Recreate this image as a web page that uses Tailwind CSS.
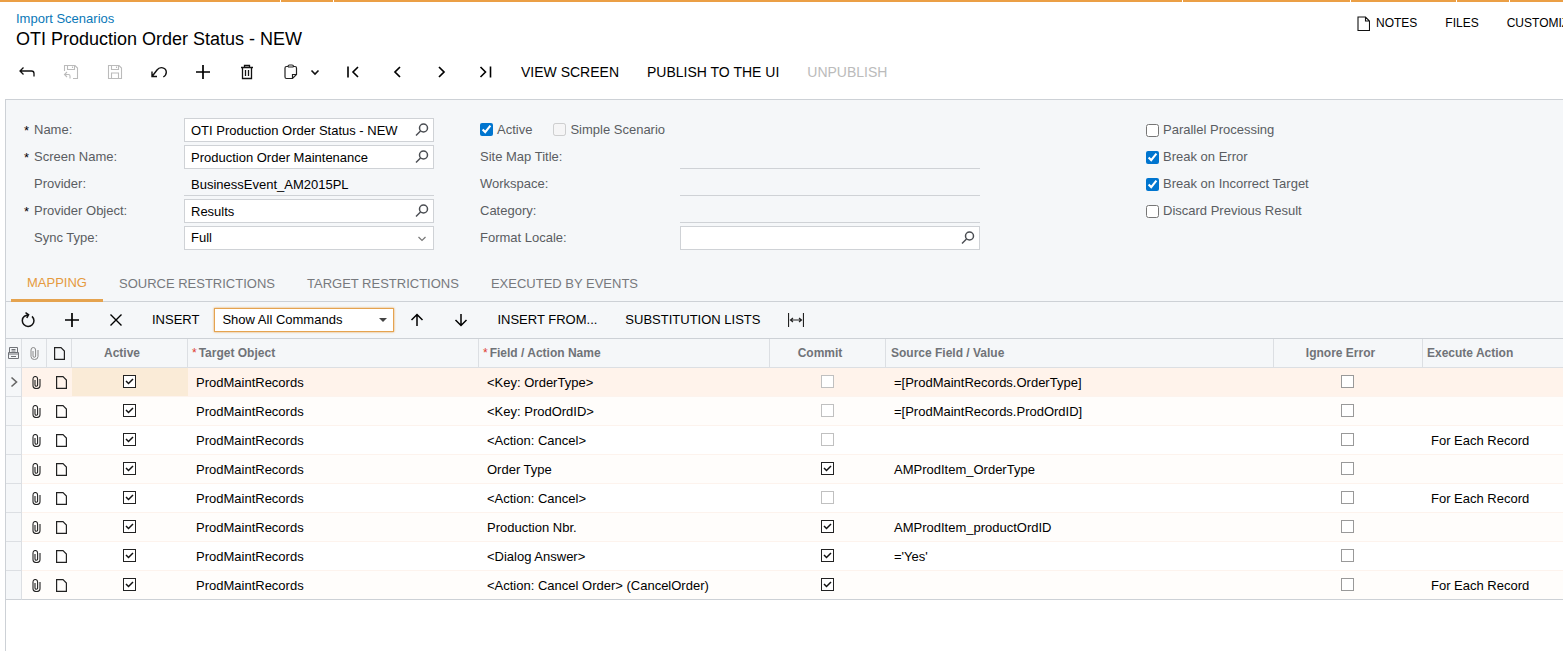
<!DOCTYPE html>
<html lang="en">
<head>
    <meta charset="UTF-8">
    <meta name="viewport" content="width=device-width, initial-scale=1.0">
    <title>Import Scenarios</title>
    <script src="https://cdn.jsdelivr.net/npm/@tailwindcss/browser@4"></script>
</head>
<body class="min-h-screen flex flex-col bg-white text-black text-[13px] leading-4 font-['Liberation_Sans',Arial,sans-serif] overflow-x-hidden">

    <!-- Top strip -->
    <div class="flex gap-px h-0.5 shrink-0">
        <div class="w-[280px] bg-[#eb9f45]"></div>
        <div class="w-[52px] bg-[#eb9f45]"></div>
        <div class="grow bg-[#eb9f45]"></div>
        <div class="w-[167px] bg-[#eb9f45]"></div>
        <div class="w-[105px] bg-[#eb9f45]"></div>
        <div class="w-[52px] bg-[#eb9f45]"></div>
        <div class="w-[53px] bg-[#eb9f45]"></div>
    </div>

    <!-- Header -->
    <header class="flex justify-between h-12 pl-4 pt-[9px]">
        <div>
            <a href="#" class="block text-[#0a78b8]">Import Scenarios</a>
            <h1 class="text-[18px] leading-6">OTI Production Order Status - NEW</h1>
        </div>
        <div class="flex items-start gap-7 w-[206px] pt-0.5 overflow-hidden text-xs leading-5 whitespace-nowrap">
            <button class="flex items-center gap-1.5">
                <svg class="w-[13px] h-[15px]" viewBox="0 0 13 15" fill="none" stroke="#111" stroke-width="1.1"><path d="M1 1h7.500l4 4v9.500H1zM8.500 1v4h4"/></svg>
                NOTES
            </button>
            <button>FILES</button>
            <button>CUSTOMIZATION</button>
        </div>
    </header>

    <!-- Main toolbar -->
    <div class="flex items-center pl-[5px] h-11 text-sm">
        <button aria-label="Back" class="w-11 flex justify-center"><svg class="w-4 h-4" viewBox="0 0 16 16" fill="none" stroke="#111" stroke-width="1.3"><path d="M4.500 3.500L1 7l3.500 3.500M1 7h11.500q2.500 0 2.500 2.500v3"/></svg></button>
        <button aria-label="Save and close" disabled class="w-11 flex justify-center"><svg class="w-4 h-4" viewBox="0 0 16 16" fill="none" stroke="#bbb" stroke-width="1.100"><path d="M1.500 7V1.500h10.500l2.500 2.500v10.500H10M4.500 1.500v4h7v-4M9.500 2.500v1.500M4 8L1.500 10.500 4 13M1.500 10.500H5.500q1.500 0 1.500 1.500v2.500"/></svg></button>
        <button aria-label="Save" disabled class="w-11 flex justify-center"><svg class="w-4 h-4" viewBox="0 0 16 16" fill="none" stroke="#bbb" stroke-width="1.100"><path d="M1.500 1.500h10.500l2.500 2.500v10.500h-13zM4.500 1.500v4h7v-4M9.500 2.500v1.500M4.500 14.500v-5.500h7v5.500"/></svg></button>
        <button aria-label="Undo" class="w-11 flex justify-center"><svg class="w-4 h-4" viewBox="0 0 16 16" fill="none" stroke="#111" stroke-width="1.4"><path d="M1 7.500v5h5M1 12.500L6 6C9 2 15.300 3.500 15.300 8.300c0 2-1.200 3.700-3 4.700"/></svg></button>
        <button aria-label="Add" class="w-11 flex justify-center"><svg class="w-4 h-4" viewBox="0 0 16 16" fill="none" stroke="#000" stroke-width="1.700"><path d="M8 1v14M1 8h14"/></svg></button>
        <button aria-label="Delete" class="w-11 flex justify-center"><svg class="w-4 h-4" viewBox="0 0 16 16" fill="none" stroke="#111" stroke-width="1.300"><path d="M2 3.500h12M5.500 3V1.500h5V3M3.500 3.500v11h9v-11M6.500 6v6M9.500 6v6"/></svg></button>
        <button aria-label="Clipboard" class="flex items-center gap-2 pl-3.5 pr-2">
            <svg class="w-4 h-4" viewBox="0 0 16 16" fill="none" stroke="#222" stroke-width="1.2"><path d="M5 2.500H3.500q-1.500 0-1.500 1.500v9q0 1.500 1.500 1.500H9.500L13.500 10.500V4q0-1.500-1.500-1.500h-1.500M5 2.500q0-1.500 1.500-1.500h2.500q1.500 0 1.500 1.500M5 3h5.500M9.500 14.500v-4h4"/></svg>
            <svg class="w-4 h-4" viewBox="0 0 16 16" fill="none" stroke="#111" stroke-width="1.600"><path d="M4.500 6.500L8 10l3.500-3.500"/></svg>
        </button>
        <button aria-label="First" class="w-11 flex justify-center"><svg class="w-4 h-4" viewBox="0 0 16 16" fill="none" stroke="#000" stroke-width="1.600"><path d="M3 2.500v11M13 3L8 8l5 5"/></svg></button>
        <button aria-label="Previous" class="w-11 flex justify-center"><svg class="w-4 h-4" viewBox="0 0 16 16" fill="none" stroke="#000" stroke-width="1.700"><path d="M11 3L6 8l5 5"/></svg></button>
        <button aria-label="Next" class="w-11 flex justify-center"><svg class="w-4 h-4" viewBox="0 0 16 16" fill="none" stroke="#000" stroke-width="1.700"><path d="M6 3l5 5-5 5"/></svg></button>
        <button aria-label="Last" class="w-11 flex justify-center"><svg class="w-4 h-4" viewBox="0 0 16 16" fill="none" stroke="#000" stroke-width="1.600"><path d="M3.500 3l5 5-5 5M13.500 2.500v11"/></svg></button>
        <button class="px-3.5">VIEW SCREEN</button>
        <button class="px-3.5">PUBLISH TO THE UI</button>
        <button disabled class="px-3.5 text-[#bbb]">UNPUBLISH</button>
    </div>

    <main class="grow mt-[5px] ml-[5px] border-l border-t border-[#cdd1d6]">
        <div class="bg-[#f5f7f9]">

            <!-- Form -->
            <form class="flex px-[18px] pt-[18px] text-[#5a5d62]">
                <div class="w-[410px] shrink-0 flex flex-col gap-[3px]">
                    <div class="flex">
                        <span class="w-2.5 pt-[5px] text-black">*</span>
                        <label for="name" class="w-[150px] pt-1">Name:</label>
                        <div class="relative grow">
                            <input id="name" type="text" value="OTI Production Order Status - NEW" class="w-full h-6 pl-1.5 pr-7 bg-white border border-[#cfd2d6] text-black">
                            <svg class="absolute right-1 top-1 w-4 h-4" viewBox="0 0 16 16" fill="none" stroke="#4a4d52" stroke-width="1.500"><circle cx="9.500" cy="6" r="4"/><path d="M6.500 9L2 13.500"/></svg>
                        </div>
                    </div>
                    <div class="flex">
                        <span class="w-2.5 pt-[5px] text-black">*</span>
                        <label for="screenName" class="w-[150px] pt-1">Screen Name:</label>
                        <div class="relative grow">
                            <input id="screenName" type="text" value="Production Order Maintenance" class="w-full h-6 pl-1.5 pr-7 bg-white border border-[#cfd2d6] text-black">
                            <svg class="absolute right-1 top-1 w-4 h-4" viewBox="0 0 16 16" fill="none" stroke="#4a4d52" stroke-width="1.500"><circle cx="9.500" cy="6" r="4"/><path d="M6.500 9L2 13.500"/></svg>
                        </div>
                    </div>
                    <div class="flex">
                        <label for="provider" class="w-[160px] pl-2.5 pt-1">Provider:</label>
                        <input id="provider" type="text" readonly value="BusinessEvent_AM2015PL" class="grow min-w-0 h-6 pl-[7px] pt-px border-b border-[#cfd2d6] text-black">
                    </div>
                    <div class="flex">
                        <span class="w-2.5 pt-[5px] text-black">*</span>
                        <label for="providerObject" class="w-[150px] pt-1">Provider Object:</label>
                        <div class="relative grow">
                            <input id="providerObject" type="text" value="Results" class="w-full h-6 pl-1.5 pr-7 bg-white border border-[#cfd2d6] text-black">
                            <svg class="absolute right-1 top-1 w-4 h-4" viewBox="0 0 16 16" fill="none" stroke="#4a4d52" stroke-width="1.500"><circle cx="9.500" cy="6" r="4"/><path d="M6.500 9L2 13.500"/></svg>
                        </div>
                    </div>
                    <div class="flex">
                        <label for="syncType" class="w-[160px] pl-2.5 pt-1">Sync Type:</label>
                        <div class="relative grow">
                            <select id="syncType" class="appearance-none w-full h-6 pl-1.5 bg-white border border-[#cfd2d6] text-black">
                                <option>Full</option>
                            </select>
                            <svg class="absolute right-1 top-1 w-4 h-4 pointer-events-none" viewBox="0 0 16 16" fill="none" stroke="#777" stroke-width="1.200"><path d="M4.500 7L8 10.500 11.500 7"/></svg>
                        </div>
                    </div>
                </div>

                <div class="w-[500px] shrink-0 ml-[46px] flex flex-col gap-[3px]">
                    <div class="flex items-start gap-[21px] h-6">
                        <label class="flex items-start gap-1 pt-1"><input type="checkbox" checked class="w-[13px] h-[13px] mt-px accent-[#0075cf]">Active</label>
                        <label class="flex items-start gap-1 pt-1"><input type="checkbox" disabled class="w-[13px] h-[13px] mt-px">Simple Scenario</label>
                    </div>
                    <div class="flex">
                        <label for="siteMap" class="w-[200px] pt-1">Site Map Title:</label>
                        <input id="siteMap" type="text" readonly class="grow h-6 border-b border-[#cfd2d6]">
                    </div>
                    <div class="flex">
                        <label for="workspace" class="w-[200px] pt-1">Workspace:</label>
                        <input id="workspace" type="text" readonly class="grow h-6 border-b border-[#cfd2d6]">
                    </div>
                    <div class="flex">
                        <label for="category" class="w-[200px] pt-1">Category:</label>
                        <input id="category" type="text" readonly class="grow h-6 border-b border-[#cfd2d6]">
                    </div>
                    <div class="flex">
                        <label for="locale" class="w-[200px] pt-1">Format Locale:</label>
                        <div class="relative grow">
                            <input id="locale" type="text" class="w-full h-6 pl-1.5 pr-7 bg-white border border-[#cfd2d6] text-black">
                            <svg class="absolute right-1 top-1 w-4 h-4" viewBox="0 0 16 16" fill="none" stroke="#4a4d52" stroke-width="1.500"><circle cx="9.500" cy="6" r="4"/><path d="M6.500 9L2 13.500"/></svg>
                        </div>
                    </div>
                </div>

                <div class="ml-[166px] flex flex-col gap-[3px] whitespace-nowrap">
                    <label class="flex items-start gap-1 h-6 pt-1"><input type="checkbox" class="w-[13px] h-[13px] mt-0.5">Parallel Processing</label>
                    <label class="flex items-start gap-1 h-6 pt-1"><input type="checkbox" checked class="w-[13px] h-[13px] mt-0.5 accent-[#0075cf]">Break on Error</label>
                    <label class="flex items-start gap-1 h-6 pt-1"><input type="checkbox" checked class="w-[13px] h-[13px] mt-0.5 accent-[#0075cf]">Break on Incorrect Target</label>
                    <label class="flex items-start gap-1 h-6 pt-1"><input type="checkbox" class="w-[13px] h-[13px] mt-0.5">Discard Previous Result</label>
                </div>
            </form>

            <!-- Tabs -->
            <div class="flex pl-[5px] mt-[15px] h-[37px] border-b border-[#cdd1d6] text-[#77797d]">
                <button class="px-4 pt-0.5 h-[37px] border-b-3 border-[#e5a34f] text-[#e59a3e]">MAPPING</button>
                <button class="px-4 pt-0.5">SOURCE RESTRICTIONS</button>
                <button class="px-4 pt-0.5">TARGET RESTRICTIONS</button>
                <button class="px-4 pt-0.5">EXECUTED BY EVENTS</button>
            </div>

            <!-- Grid toolbar -->
            <div class="flex items-center h-9">
                <button aria-label="Refresh" class="w-11 flex justify-center"><svg class="w-4 h-4" viewBox="0 0 16 16" fill="none" stroke="#111" stroke-width="1.500"><path d="M12 4.400A5.800 5.800 0 1 1 4.500 4.200L8 2.800M5.500.6L8.600 2.700 6.800 6"/></svg></button>
                <button aria-label="Add row" class="w-11 flex justify-center"><svg class="w-4 h-4" viewBox="0 0 16 16" fill="none" stroke="#000" stroke-width="1.700"><path d="M8 1v14M1 8h14"/></svg></button>
                <button aria-label="Delete row" class="w-11 flex justify-center"><svg class="w-4 h-4" viewBox="0 0 16 16" fill="none" stroke="#000" stroke-width="1.400"><path d="M2.500 2.500l11 11M13.500 2.500l-11 11"/></svg></button>
                <button class="px-3.5">INSERT</button>
                <div class="relative w-[180px] mx-px">
                    <select aria-label="Commands" class="appearance-none w-full h-6 pl-[7px] bg-white border border-[#e5a34f] shadow-[0_0_2px_#e5a34f]">
                        <option>Show All Commands</option>
                    </select>
                    <svg class="absolute right-[7px] top-2.5 w-2 h-1 pointer-events-none" viewBox="0 0 8 4" fill="#444"><path d="M0 0h8L4 4z"/></svg>
                </div>
                <button aria-label="Move up" class="w-11 flex justify-center"><svg class="w-4 h-4" viewBox="0 0 16 16" fill="none" stroke="#000" stroke-width="1.500"><path d="M8 14V3M2.500 8L8 2.500 13.500 8"/></svg></button>
                <button aria-label="Move down" class="w-11 flex justify-center"><svg class="w-4 h-4" viewBox="0 0 16 16" fill="none" stroke="#000" stroke-width="1.500"><path d="M8 2v11M2.500 8L8 13.500 13.500 8"/></svg></button>
                <button class="px-3.5">INSERT FROM...</button>
                <button class="px-3.5">SUBSTITUTION LISTS</button>
                <button aria-label="Fit columns" class="w-11 flex justify-center"><svg class="w-4 h-4" viewBox="0 0 16 16" fill="none" stroke="#222" stroke-width="1.200"><path d="M.5 1v14M15.500 1v14M2.500 8h11M5 6L2.500 8 5 10M11 6l2.500 2-2.500 2"/></svg></button>
            </div>
        </div>

        <!-- Grid -->
        <table class="table-fixed w-full border-separate border-spacing-0 border-t border-[#cdd1d6]">
            <colgroup>
                <col class="w-4"><col class="w-[25px]"><col class="w-[25px]"><col class="w-[116px]"><col class="w-[291px]">
                <col class="w-[291px]"><col class="w-[116px]"><col class="w-[388px]"><col class="w-[149px]"><col>
            </colgroup>
            <thead class="bg-[#f5f7f9] text-xs text-left text-[#707378]">
                <tr class="h-[29px]">
                    <th class="border-r border-b border-[#dcdfe3]"><svg class="mx-auto w-[11px] h-3" viewBox="0 0 11 12" fill="none" stroke="#707378"><path d="M1.500 5.500v-5h8v5M3.500 2.500h4M3.500 4h4M.5 5.500h10v6H.5zM.5 7h10M3 9.500h5"/></svg></th>
                    <th class="border-r border-b border-[#dcdfe3]"><svg class="mx-auto w-[9px] h-[13px]" viewBox="0 0 9 13" fill="none" stroke="#888"><path d="M3 4v5q0 1.300 1.300 1.300T5.600 9V3Q5.600.5 3.300.5T1 3v6.500q0 3 3.500 3t3.500-3V3"/></svg></th>
                    <th class="border-r border-b border-[#dcdfe3]"><svg class="mx-auto w-[11px] h-[13px]" viewBox="0 0 11 13" fill="none" stroke="#222" stroke-width="1.200"><path d="M.6.6h6.400l3.400 3.400v8.400H.6z"/></svg></th>
                    <th class="border-r border-b border-[#dcdfe3] pr-[15px] text-center">Active</th>
                    <th class="border-r border-b border-[#dcdfe3] pl-1"><span class="text-[#e03c31] pr-0.5 font-normal">*</span>Target Object</th>
                    <th class="border-r border-b border-[#dcdfe3] pl-1"><span class="text-[#e03c31] pr-0.5 font-normal">*</span>Field / Action Name</th>
                    <th class="border-r border-b border-[#dcdfe3] pr-[15px] text-center">Commit</th>
                    <th class="border-r border-b border-[#dcdfe3] pl-[5px]">Source Field / Value</th>
                    <th class="border-r border-b border-[#dcdfe3] pr-[15px] text-center">Ignore Error</th>
                    <th class="border-b border-[#dcdfe3] pl-1">Execute Action</th>
                </tr>
            </thead>
            <tbody id="rows"></tbody>
        </table>
    </main>

    <script>
        const rows = [
            { field: '&lt;Key: OrderType&gt;', commit: false, source: '=[ProdMaintRecords.OrderType]', action: '' },
            { field: '&lt;Key: ProdOrdID&gt;', commit: false, source: '=[ProdMaintRecords.ProdOrdID]', action: '' },
            { field: '&lt;Action: Cancel&gt;', commit: false, source: '', action: 'For Each Record' },
            { field: 'Order Type', commit: true, source: 'AMProdItem_OrderType', action: '' },
            { field: '&lt;Action: Cancel&gt;', commit: false, source: '', action: 'For Each Record' },
            { field: 'Production Nbr.', commit: true, source: 'AMProdItem_productOrdID', action: '' },
            { field: '&lt;Dialog Answer&gt;', commit: true, source: "='Yes'", action: '' },
            { field: '&lt;Action: Cancel Order&gt; (CancelOrder)', commit: true, source: '', action: 'For Each Record' }
        ];

        function checkbox(label, checked, border) {
            return `
                <span class="grid w-[13px] h-[13px] mx-auto">
                    <input type="checkbox" aria-label="${label}" ${checked ? 'checked' : ''} class="peer appearance-none col-start-1 row-start-1 w-[13px] h-[13px] bg-white border ${border} checked:border-[#222]">
                    <svg class="hidden peer-checked:block pointer-events-none col-start-1 row-start-1 w-[13px] h-[13px]" viewBox="0 0 13 13" fill="none" stroke="#111" stroke-width="1.500"><path d="M3 6l2.500 2.500L10 4"/></svg>
                </span>`;
        }

        // Render grid rows
        document.getElementById('rows').innerHTML = rows.map((row, i) => {
            const line = i === rows.length - 1 ? 'border-b border-[#cdd1d6]' : 'border-b border-[#fdf3ed]';
            const gutter = i === rows.length - 1 ? 'border-b-[#cdd1d6]' : 'border-b-[#dcdfe3]';
            return `
            <tr class="h-[29px] ${i === 0 ? 'bg-[#fff3eb]' : i % 2 ? 'bg-[#fffdfb]' : 'bg-white'}">
                <td class="bg-[#f5f7f9] border-r border-b border-r-[#dcdfe3] ${gutter}">${i === 0 ? '<svg class="mx-auto w-2 h-3" viewBox="0 0 8 12" fill="none" stroke="#666" stroke-width="1.600"><path d="M1.500 1.500L6.500 6l-5 4.500"/></svg>' : ''}</td>
                <td class="${line} pl-[3px]"><svg class="mx-auto w-[9px] h-[13px]" viewBox="0 0 9 13" fill="none" stroke="#222" stroke-width="1.100"><path d="M3 4v5q0 1.300 1.300 1.300T5.600 9V3Q5.600.5 3.300.5T1 3v6.500q0 3 3.500 3t3.500-3V3"/></svg></td>
                <td class="${line} pl-[3px]"><svg class="mx-auto w-[11px] h-[13px]" viewBox="0 0 11 13" fill="none" stroke="#222" stroke-width="1.200"><path d="M.6.6h6.400l3.400 3.400v8.400H.6z"/></svg></td>
                <td class="${line} pr-0.5 pb-px ${i === 0 ? 'bg-[#faebd7]' : ''}">${checkbox('Active', true, 'border-[#222]')}</td>
                <td class="${line} pt-px pl-2">ProdMaintRecords</td>
                <td class="${line} pt-px pl-2">${row.field}</td>
                <td class="${line} pr-0.5 pb-px">${checkbox('Commit', row.commit, 'border-[#c0c0c0]')}</td>
                <td class="${line} pt-px pl-2">${row.source}</td>
                <td class="${line} pr-0.5 pb-px">${checkbox('Ignore Error', false, 'border-[#999]')}</td>
                <td class="${line} pt-px pl-2">${row.action}</td>
            </tr>`;
        }).join('');
    </script>
</body>
</html>
